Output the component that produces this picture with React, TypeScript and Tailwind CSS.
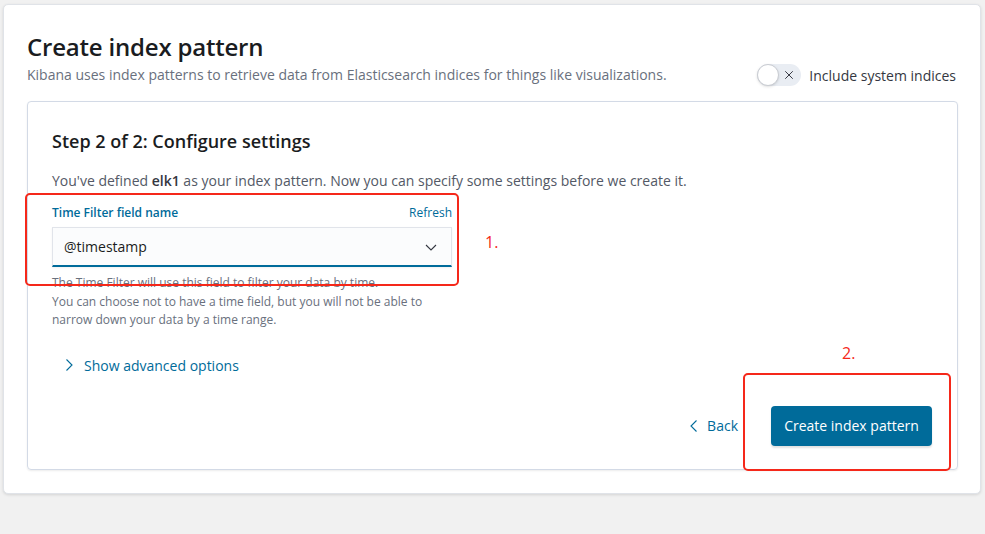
import React from "react";

const BLUE = "#006b9a";

function Chevron({ dir, className }: { dir: "down" | "right" | "left"; className?: string }) {
  const d =
    dir === "down"
      ? "M3 6l5 5 5-5"
      : dir === "right"
        ? "M5.5 2.5L11 8l-5.5 5.5"
        : "M10.5 2.5L5 8l5.5 5.5";
  return (
    <svg viewBox="0 0 16 16" className={className} fill="none" stroke="currentColor" strokeWidth="1.1">
      <path d={d} />
    </svg>
  );
}

function Toggle() {
  return (
    <span className="relative flex h-[22px] w-[44px] items-center rounded-full bg-[#e9edf3]">
      <span className="absolute left-0 top-0 size-[22px] rounded-full border border-[#c9ccd2] bg-white shadow-sm" />
      <svg viewBox="0 0 16 16" className="absolute right-[6px] size-[12px] text-[#343741]" fill="none" stroke="currentColor" strokeWidth="1.3">
        <path d="M3 3l10 10M13 3L3 13" />
      </svg>
    </span>
  );
}

export default function App() {
  return (
    <div
      className="relative h-[534px] w-[985px] bg-[#f1f1f1] pl-[3px] pt-[4px] text-[#343741]"
      style={{ fontFamily: '"Open Sans", "Liberation Sans", sans-serif' }}
    >
      {/* Outer panel */}
      <div className="h-[490px] w-[978px] rounded-[5px] border border-[#e0e3e8] bg-white px-[23px] pt-[27px] shadow-[0_1px_3px_rgba(0,0,0,0.12)]">
        <h1 className="text-[24px] font-semibold leading-[30px] tracking-[-0.2px] text-[#1a1c21]">
          Create index pattern
        </h1>
        <div className="mt-[1px] flex items-center justify-between pr-[1px]">
          <p className="text-[14px] leading-[24px] text-[#69707d]">
            Kibana uses index patterns to retrieve data from Elasticsearch indices for things like visualizations.
          </p>
          <label className="flex items-center gap-[8px]">
            <Toggle />
            <span className="text-[14px] text-[#343741]">Include system indices</span>
          </label>
        </div>

        {/* Inner panel */}
        <div className="mt-[14px] h-[369px] w-[931px] rounded-[4px] border border-[#d3dae6] px-[24px] pt-[24px] shadow-[0_1px_2px_rgba(0,0,0,0.08)]">
          <h2 className="text-[18px] font-semibold leading-[30px] text-[#1a1c21]">
            Step 2 of 2: Configure settings
          </h2>
          <p className="mt-[14px] text-[14px] leading-[22px] text-[#535966]">
            You've defined <b className="font-semibold text-[#343741]">elk1</b> as your index pattern. Now you can specify some settings before we create it.
          </p>

          <div className="mt-[12px] w-[400px]">
            <div className="flex items-center justify-between text-[12px] leading-[18px]">
              <span className="font-semibold" style={{ color: BLUE }}>Time Filter field name</span>
              <span style={{ color: BLUE }}>Refresh</span>
            </div>
            <div
              className="mt-[5px] flex h-[40px] items-center justify-between border border-b-2 border-[#e1e4ea] bg-[#fbfcfd] pl-[11px] pr-[12px] shadow-[0_1px_2px_rgba(0,0,0,0.06)]"
              style={{ borderBottomColor: BLUE }}
            >
              <span className="text-[14px] text-[#1a1c21]">@timestamp</span>
              <Chevron dir="down" className="size-[16px] text-[#343741]" />
            </div>
            <div className="mt-[7px] text-[12px] leading-[18.5px] text-[#69707d]">
              <p>The Time Filter will use this field to filter your data by time.</p>
              <p>You can choose not to have a time field, but you will not be able to</p>
              <p>narrow down your data by a time range.</p>
            </div>
          </div>

          <button className="mt-[25px] flex items-center gap-[7px] pl-[9px] text-[14px]" style={{ color: BLUE }}>
            <Chevron dir="right" className="size-[16px]" />
            <span>Show advanced options</span>
          </button>

          <div className="mt-[30px] flex items-center justify-end gap-[33px]">
            <button className="flex items-center gap-[5px] text-[14px]" style={{ color: BLUE }}>
              <Chevron dir="left" className="size-[16px]" />
              <span>Back</span>
            </button>
            <button
              className="mr-[1px] h-[40px] w-[161px] rounded-[4px] text-[14px] font-medium text-white shadow-[0_2px_2px_rgba(0,0,0,0.12)]"
              style={{ backgroundColor: BLUE }}
            >
              Create index pattern
            </button>
          </div>
        </div>
      </div>

      {/* Annotations */}
      <div className="absolute left-[25px] top-[193px] h-[93px] w-[434px] rounded-[5px] border-[2.5px] border-[#f5281a]" />
      <div className="absolute left-[485px] top-[230px] text-[16px] leading-[24px] text-[#f5281a]">1.</div>
      <div className="absolute left-[743px] top-[373px] h-[98px] w-[208px] rounded-[5px] border-[2.5px] border-[#f5281a]" />
      <div className="absolute left-[842px] top-[341px] text-[16px] leading-[24px] text-[#f5281a]">2.</div>
    </div>
  );
}
